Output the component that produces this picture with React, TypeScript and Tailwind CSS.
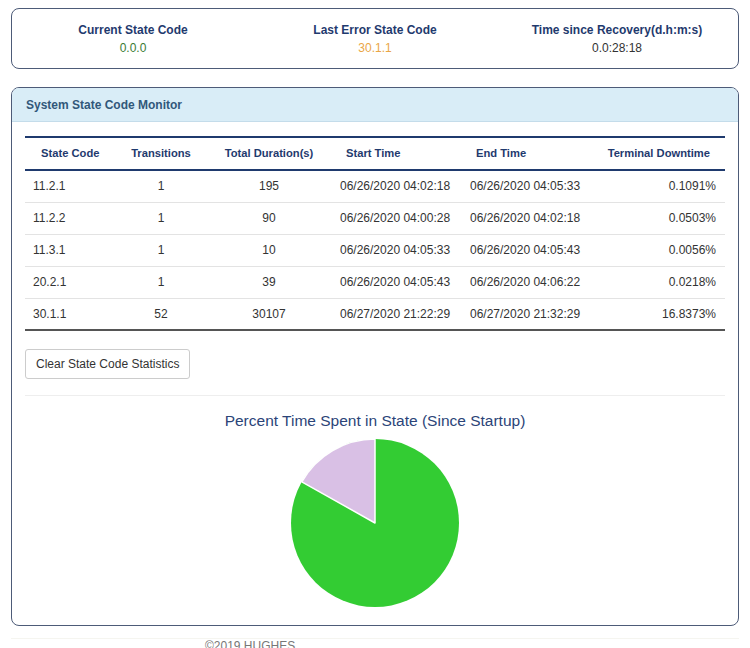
const rows = [
  { code: "11.2.1", transitions: "1", duration: "195", start: "06/26/2020 04:02:18", end: "06/26/2020 04:05:33", downtime: "0.1091%" },
  { code: "11.2.2", transitions: "1", duration: "90", start: "06/26/2020 04:00:28", end: "06/26/2020 04:02:18", downtime: "0.0503%" },
  { code: "11.3.1", transitions: "1", duration: "10", start: "06/26/2020 04:05:33", end: "06/26/2020 04:05:43", downtime: "0.0056%" },
  { code: "20.2.1", transitions: "1", duration: "39", start: "06/26/2020 04:05:43", end: "06/26/2020 04:06:22", downtime: "0.0218%" },
  { code: "30.1.1", transitions: "52", duration: "30107", start: "06/27/2020 21:22:29", end: "06/27/2020 21:32:29", downtime: "16.8373%" },
];

function PieChart() {
  // lilac wedge = 16.84% of the circle, drawn counter-clockwise from 12 o'clock
  const r = 84;
  const cx = 85;
  const cy = 85;
  const a = 0.168373 * Math.PI * 2;
  const x = cx - r * Math.sin(a);
  const y = cy - r * Math.cos(a);
  return (
    <svg width="170" height="170" viewBox="0 0 170 170">
      <circle cx={cx} cy={cy} r={r} fill="#33cc33" />
      <path
        d={`M${cx} ${cy} L${cx} ${cy - r} A${r} ${r} 0 0 0 ${x} ${y} Z`}
        fill="#d9c0e5"
        stroke="#ffffff"
        strokeWidth="1.5"
        strokeLinejoin="round"
      />
    </svg>
  );
}

export default function App() {
  return (
    <div className="h-screen bg-white font-['Liberation_Sans',Arial,sans-serif] text-[12px] text-[#333] px-[11px] pt-[8px] overflow-hidden">
      {/* status summary */}
      <div className="border border-[#4d5b78] rounded-[8px] h-[61px] grid grid-cols-3 items-center text-center">
        <div className="flex flex-col">
          <span className="font-bold text-[#1f3a6e]">Current State Code</span>
          <span className="text-[#3a7a34]">0.0.0</span>
        </div>
        <div className="flex flex-col">
          <span className="font-bold text-[#1f3a6e]">Last Error State Code</span>
          <span className="text-[#eaa646]">30.1.1</span>
        </div>
        <div className="flex flex-col">
          <span className="font-bold text-[#1f3a6e]">Time since Recovery(d.h:m:s)</span>
          <span className="text-[#333]">0.0:28:18</span>
        </div>
      </div>

      {/* monitor panel */}
      <div className="mt-[18px] border border-[#4d5b78] rounded-[8px] overflow-hidden h-[539px]">
        <div className="bg-[#d9edf7] h-[34px] flex items-center px-[14px] border-b border-[#c4dcea]">
          <span className="font-bold text-[#31587a]">System State Code Monitor</span>
        </div>

        <div className="px-[13px] pt-[14px]">
          <table className="w-full table-fixed border-collapse">
            <colgroup>
              <col className="w-[90px]" />
              <col className="w-[92px]" />
              <col className="w-[124px]" />
              <col className="w-[130px]" />
              <col className="w-[129px]" />
              <col />
            </colgroup>
            <thead>
              <tr className="border-t-2 border-b-2 border-[#1f3a6e] h-[33px] text-[#1f3a6e] text-[11.2px]">
                <th className="font-bold text-left pl-[16px]">State Code</th>
                <th className="font-bold text-center">Transitions</th>
                <th className="font-bold text-center">Total Duration(s)</th>
                <th className="font-bold text-left pl-[15px]">Start Time</th>
                <th className="font-bold text-left pl-[15px]">End Time</th>
                <th className="font-bold text-right pr-[15px]">Terminal Downtime</th>
              </tr>
            </thead>
            <tbody>
              {rows.map((row, idx) => (
                <tr
                  key={row.code}
                  className={`h-[32px] ${idx === rows.length - 1 ? "border-b-2 border-[#555]" : "border-b border-[#e3e3e3]"}`}
                >
                  <td className="text-left pl-[8px]">{row.code}</td>
                  <td className="text-center">{row.transitions}</td>
                  <td className="text-center">{row.duration}</td>
                  <td className="text-left pl-[9px]">{row.start}</td>
                  <td className="text-left pl-[9px]">{row.end}</td>
                  <td className="text-right pr-[9px]">{row.downtime}</td>
                </tr>
              ))}
            </tbody>
          </table>

          <button className="mt-[18px] h-[30px] px-[10px] border border-[#cccccc] rounded-[3px] bg-white text-[#333] text-[12px]">
            Clear State Code Statistics
          </button>

          <div className="mt-[16px] border-t border-[#eeeeee]" />

          <div className="flex flex-col items-center pt-[15px]">
            <div className="text-[15.5px] text-[#2b4478] leading-[20px]">Percent Time Spent in State (Since Startup)</div>
            <div className="mt-[7px]">
              <PieChart />
            </div>
          </div>
        </div>
      </div>

      <div className="mt-[12px] border-t border-[#f5f5f0] pl-[194px] text-[#777] leading-[14px]">©2019 HUGHES</div>
    </div>
  );
}
